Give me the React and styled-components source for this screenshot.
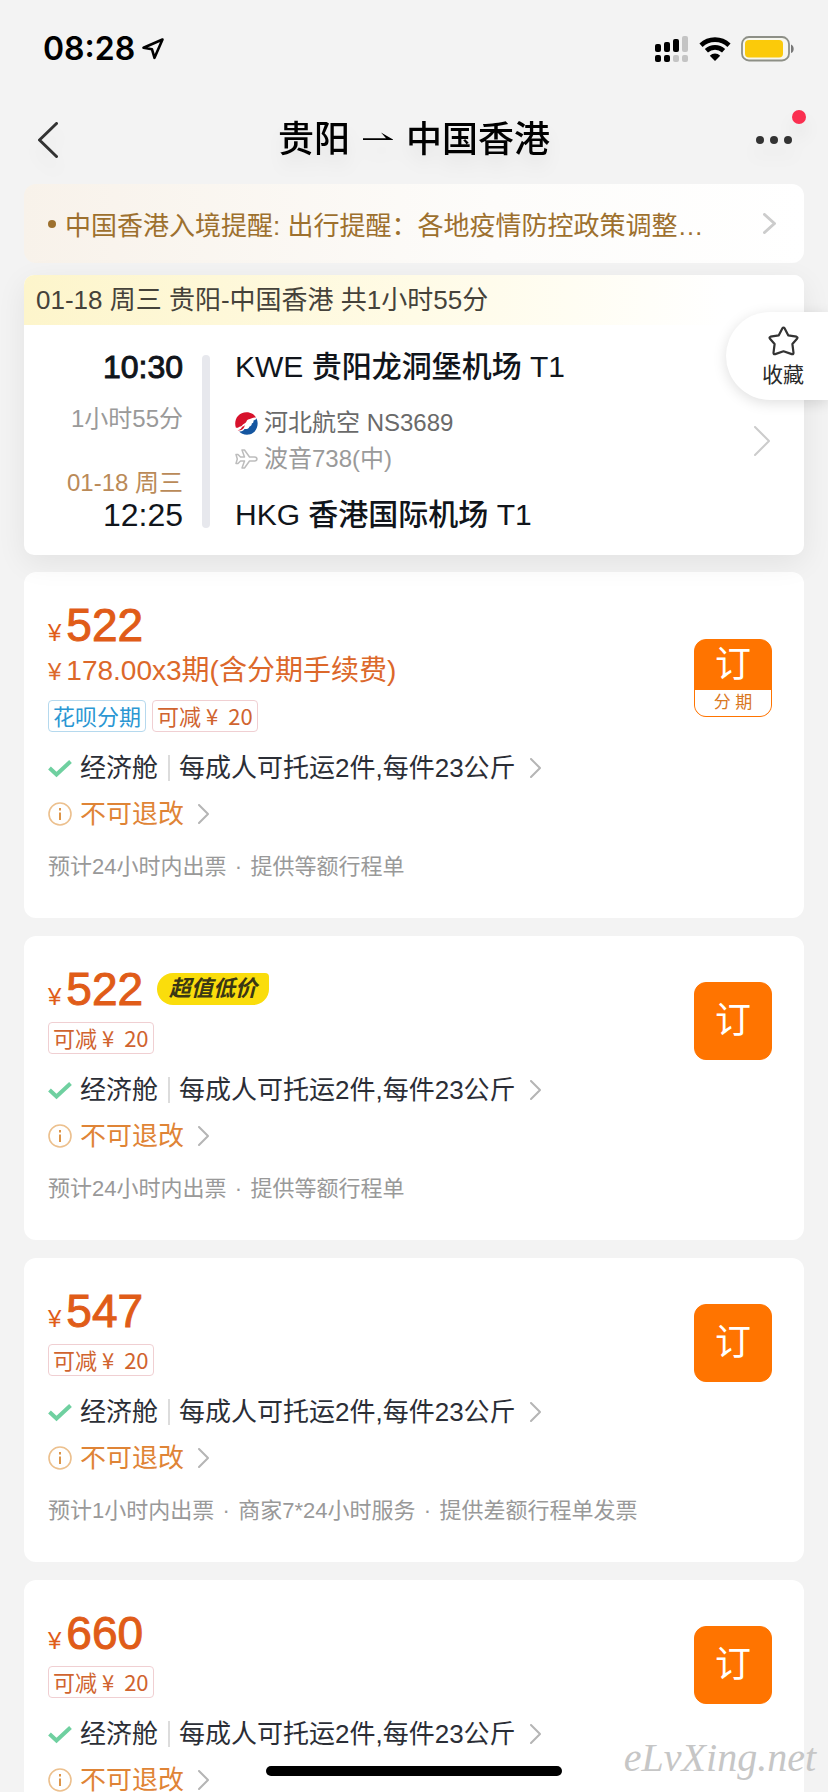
import React from "react";
import styled, { createGlobalStyle, css } from "styled-components";

const GlobalStyle = createGlobalStyle`
  *, *::before, *::after { box-sizing: border-box; }
  body {
    margin: 0;
    background: #f3f3f3;
    color: #2b2e36;
    font-family: "Liberation Sans", "Noto Sans CJK SC", sans-serif;
    font-size: 26px;
  }
  button { font: inherit; color: inherit; border: 0; padding: 0; background: none; cursor: pointer; }
  a { color: inherit; text-decoration: none; }
  h1, h2, p { margin: 0; font-weight: 400; }
  svg { display: block; flex: none; }
`;

const Screen = styled.div`
  position: relative;
  height: 100vh;
  overflow: hidden;
  display: flex;
  flex-direction: column;
`;

const StatusBar = styled.div`
  flex: none;
  height: 98px;
  padding: 0 33px 0 43px;
  display: flex;
  align-items: center;
  justify-content: space-between;
  color: #000;
`;

const Clock = styled.span`
  display: flex;
  align-items: center;
  gap: 6px;
  font: 600 32px/40px Inter, sans-serif;
`;

const Indicators = styled.span`
  display: flex;
  align-items: center;
  gap: 10px;
`;

const TopBar = styled.header`
  flex: none;
  height: 84px;
  padding: 0 36px 0 38px;
  display: grid;
  grid-template-columns: 78px 1fr 80px;
  align-items: center;
  filter: drop-shadow(0 12px 8px rgba(0, 0, 0, 0.06));
`;

const IconButton = styled.button`
  position: relative;
  height: 48px;
  display: flex;
  align-items: center;
  justify-content: ${(p) => (p.$end ? "flex-end" : "flex-start")};
`;

const UnreadDot = styled.i`
  position: absolute;
  top: -6px;
  right: -14px;
  width: 14px;
  height: 14px;
  border-radius: 50%;
  background: #fa2f50;
`;

const Route = styled.h1`
  display: flex;
  align-items: center;
  justify-content: center;
  gap: 13px;
  font-size: 36px;
  line-height: 48px;
  font-weight: 500;
  color: #000;
`;

const Content = styled.main`
  flex: 1;
  min-height: 0;
  overflow: hidden;
  padding: 2px 24px 0;
`;

const Notice = styled.a`
  display: flex;
  align-items: center;
  gap: 9px;
  height: 79px;
  margin-bottom: 12px;
  padding: 0 28px 0 24px;
  border-radius: 12px;
  background: linear-gradient(90deg, #f8f2ea, #fdfcfa 60%, #fff);
  color: #9d702e;
`;

const Bullet = styled.i`
  flex: none;
  width: 8px;
  height: 8px;
  border-radius: 50%;
  background: currentColor;
`;

const NoticeText = styled.span`
  flex: 1;
  min-width: 0;
  overflow: hidden;
  white-space: nowrap;
  text-overflow: ellipsis;
`;

const FlightCard = styled.section`
  position: relative;
  z-index: 1;
  margin-bottom: 17px;
  border-radius: 10px;
  overflow: hidden;
  background: #fff;
  box-shadow: 0 8px 30px rgba(0, 0, 0, 0.07);
`;

const FlightSummary = styled.h2`
  padding: 0 12px;
  font-size: 26px;
  line-height: 50px;
  color: #45423a;
  background: linear-gradient(90deg, #fdf5cb, #fffbe6 50%, #fff 90%);
`;

const FlightBody = styled.div`
  display: grid;
  grid-template-columns: 159px 8px 1fr auto;
  padding: 24px 34px 22px 0;
`;

const Times = styled.div`
  display: flex;
  flex-direction: column;
  align-items: flex-end;
  line-height: 28px;
  font-size: 24px;
  color: #9a9a9a;
`;

const Time = styled.time`
  font-size: 32px;
  line-height: 36px;
  color: #11151b;
  -webkit-text-stroke: ${(p) => (p.$strong ? "1px" : "0")} currentColor;
`;

const Duration = styled.span`
  margin: 20px 0 36px;
`;

const ArrivalDate = styled.span`
  color: #ba8a58;
`;

const Rail = styled.i`
  margin: 6px -19px 5px 19px;
  border-radius: 4px;
  background: #e7e8ed;
`;

const Stops = styled.div`
  padding-left: 44px;
`;

const Airport = styled.p`
  font-size: 30px;
  line-height: 36px;
  font-weight: 500;
  color: #11151b;
`;

const Carrier = styled.div`
  margin: 20px 0;
  font-size: 24px;
  line-height: 36px;
`;

const CarrierLine = styled.p`
  display: flex;
  align-items: center;
  gap: 6px;
  color: ${(p) => (p.$muted ? "#9a9a9a" : "#6a6a6a")};
`;

const DetailLink = styled.a`
  align-self: center;
`;

const FareCard = styled.article`
  margin-bottom: 18px;
  padding: 34px 32px 36px 24px;
  border-radius: 12px;
  background: #fff;
`;

const FareHead = styled.div`
  display: flex;
  align-items: center;
  justify-content: space-between;
`;

const Pricing = styled.div`
  padding-bottom: 18px;
`;

const PriceLine = styled.div`
  display: flex;
  align-items: center;
  gap: 14px;
  padding-bottom: 6px;
`;

const Price = styled.p`
  display: flex;
  align-items: baseline;
  gap: 5px;
  height: 38px;
  font-size: 24px;
  line-height: 38px;
  color: #e05c18;
`;

const Amount = styled.span`
  font-size: 46px;
  -webkit-text-stroke: 1px currentColor;
`;

const Installment = styled.p`
  display: flex;
  align-items: baseline;
  gap: 5px;
  height: 42px;
  font-size: 28px;
  line-height: 42px;
  color: #dc682a;
`;

const Currency = styled.span`
  font-size: 24px;
`;

const BestPrice = styled.strong`
  height: 32px;
  padding: 0 12px;
  border-radius: 16px 4px 16px 16px;
  background: #fadd0c;
  color: #3a3714;
  font-size: 22px;
  line-height: 32px;
  font-weight: 700;
  font-style: italic;
`;

const Tags = styled.div`
  display: flex;
  gap: 6px;
  padding-top: 8px;
`;

const tagTones = {
  blue: css`
    color: #2b97d3;
    border-color: #b5d9ee;
  `,
  red: css`
    color: #d0642f;
    border-color: #f0cfd2;
  `,
};

const Tag = styled.span`
  height: 32px;
  padding: 0 4px;
  border: 1px solid;
  border-radius: 4px;
  font-family: "Noto Sans CJK SC", sans-serif;
  font-size: 22px;
  line-height: 28px;
  white-space: pre;
  ${(p) => tagTones[p.$tone]}
`;

const TagYen = styled.span`
  margin: 0 5px;
`;

const BookButton = styled.button`
  flex: none;
  width: 78px;
  height: 78px;
  overflow: hidden;
  display: flex;
  flex-direction: column;
  border: 1px solid #ff7400;
  border-radius: 12px;
  background: #ff7400;
  color: #fff;
`;

const BookLabel = styled.span`
  flex: 1;
  align-self: stretch;
  display: grid;
  place-items: center;
  font-size: 36px;
  line-height: 40px;
  font-weight: 400;
`;

const BookNote = styled.span`
  align-self: stretch;
  background: #fff;
  color: #d9781f;
  font-size: 17px;
  line-height: 26px;
  text-align: center;
  white-space: pre;
`;

const Details = styled.div`
  display: flex;
  flex-direction: column;
  align-items: flex-start;
  gap: 10px;
`;

const DetailRow = styled.a`
  display: flex;
  align-items: center;
  gap: 8px;
  line-height: 36px;
  color: ${(p) => (p.$warn ? "#df8436" : "#2b2e36")};
`;

const Divider = styled.i`
  width: 2px;
  height: 26px;
  margin: 0 1px 0 2px;
  background: #dcdcdc;
`;

const RowArrow = styled.span`
  margin-left: 6px;
`;

const Footnote = styled.p`
  display: flex;
  margin-top: 20px;
  font-size: 22px;
  line-height: 30px;
  color: #999;
`;

const FootnoteItem = styled.span`
  & + &::before {
    content: "·";
    display: inline-block;
    width: 24px;
    text-align: center;
  }
`;

const FavoriteButton = styled.button`
  position: absolute;
  z-index: 2;
  top: 312px;
  right: 0;
  width: 102px;
  height: 88px;
  padding: 14px 24px 0 36px;
  display: flex;
  flex-direction: column;
  align-items: center;
  gap: 5px;
  border-radius: 44px 0 0 44px;
  background: #fff;
  box-shadow: 0 3px 14px rgba(0, 0, 0, 0.13);
  color: #2a2a2a;
  font-size: 21px;
  line-height: 28px;
  white-space: nowrap;
`;

const HomeIndicator = styled.i`
  position: absolute;
  z-index: 3;
  bottom: 16px;
  left: 50%;
  width: 296px;
  height: 10px;
  margin-left: -148px;
  border-radius: 5px;
  background: #000;
`;

const Watermark = styled.span`
  position: absolute;
  z-index: 3;
  right: 12px;
  bottom: 10px;
  color: #c6c6c6;
  font: italic 40px/48px "Liberation Serif", serif;
`;

function Chevron({ width, height, stroke = 2, color = "#b5b5b5", left }) {
  const a = stroke / 2;
  const pts = left
    ? `${width - a},${a} ${a},${height / 2} ${width - a},${height - a}`
    : `${a},${a} ${width - a},${height / 2} ${a},${height - a}`;
  return (
    <svg width={width} height={height} fill="none" stroke={color} strokeWidth={stroke} strokeLinecap="round" strokeLinejoin="round" aria-hidden="true">
      <polyline points={pts} />
    </svg>
  );
}

function LocationArrow() {
  return (
    <svg width="24" height="24" fill="none" stroke="#000" strokeWidth="2.6" strokeLinejoin="round" aria-hidden="true">
      <path d="M21.500 2.500L2.500 10.800L11 12.300L13.500 20.800Z" />
    </svg>
  );
}

function SignalIcon() {
  return (
    <svg width="34" height="28" aria-hidden="true">
      <g fill="#000">
        <rect x="0" y="9" width="6" height="8" rx="2" />
        <rect x="9" y="7" width="6" height="10" rx="2" />
        <rect x="18" y="4" width="6" height="13" rx="2" />
        <rect x="0" y="20" width="6" height="7" rx="2" />
        <rect x="9" y="20" width="6" height="7" rx="2" />
      </g>
      <g fill="#c4c4c4">
        <rect x="27" y="1" width="6" height="16" rx="2" />
        <rect x="18" y="20" width="6" height="7" rx="2" />
        <rect x="27" y="20" width="6" height="7" rx="2" />
      </g>
    </svg>
  );
}

function WifiIcon() {
  return (
    <svg width="32" height="26" aria-hidden="true">
      <g fill="none" stroke="#000" strokeWidth="4.600">
        <path d="M2 9.200A20.500 20.500 0 0 1 30 9.200" />
        <path d="M7.400 14.800A12.600 12.600 0 0 1 24.600 14.800" />
      </g>
      <path d="M16 25L10.800 19.700A7.400 7.400 0 0 1 21.200 19.700Z" />
    </svg>
  );
}

function BatteryIcon() {
  return (
    <svg width="54" height="26" aria-hidden="true">
      <rect x="1" y="1" width="47" height="23.500" rx="7" fill="#f7f7ee" stroke="#8d8f86" strokeWidth="1.800" />
      <rect x="4" y="4" width="38" height="17.500" rx="4" fill="#fbca0a" />
      <path d="M50 8.500C53.600 9.600 53.600 16 50 17Z" fill="#777" />
    </svg>
  );
}

function RouteArrow() {
  return (
    <svg width="30" height="16" aria-hidden="true">
      <path d="M0 6.200H23L18 .5L30.500 7.900H0Z" fill="#000" />
    </svg>
  );
}

function MoreIcon() {
  return (
    <svg width="36" height="8" fill="#333" aria-hidden="true">
      <circle cx="4" cy="4" r="4" />
      <circle cx="18" cy="4" r="4" />
      <circle cx="32" cy="4" r="4" />
    </svg>
  );
}

function AirlineLogo() {
  return (
    <svg width="23" height="23" viewBox="0 0 23 23" aria-hidden="true">
      <circle cx="11.500" cy="11.500" r="11.300" fill="#fff" />
      <path d="M.8 15.500C-1.500 8 3 .2 11.500 .2C16 .2 19.500 2.500 21 5.500C17.500 5 16.500 6.800 14 7.200C11 7.800 12 10.500 9.500 11.500C7.500 12.300 7.500 14 5.500 14.400C3.500 14.800 3 16.500 .8 15.500Z" fill="#d7122c" />
      <path d="M21.300 6.200C24.500 12 22 20.800 14 22.600C9.500 23.300 5.800 21.300 4.200 19.500C7 19.800 8.500 18.500 9.500 17C12 17.400 14 16.500 14.300 14.700C16.500 14 16.700 12.800 16.800 11.500C18.700 11 18.500 9.500 18.500 8.500C20 8.300 20.800 7.500 21.300 6.200Z" fill="#1556a0" />
      <path d="M2.500 18.300C5.500 18 6.300 16.500 7 15C8 14 9 14.500 9.800 13C9.500 16 7 19 2.500 18.300Z" fill="#d7122c" />
    </svg>
  );
}

function PlaneIcon() {
  return (
    <svg width="23" height="20" viewBox="0 0 23 20" fill="none" stroke="#bdbdbd" strokeWidth="1.500" strokeLinejoin="round" aria-hidden="true">
      <path d="M1 5.500H3L5.500 8H9.500L7 1H9.500L14.500 8H19.500C22.800 8.300 22.800 11.700 19.500 12H14.500L9.500 19H7L9.500 12H5.500L3 14.500H1L2.300 10Z" />
    </svg>
  );
}

function StarIcon() {
  return (
    <svg width="31" height="30" viewBox="0 0 31 30" fill="none" stroke="#333" strokeWidth="2.200" strokeLinejoin="round" aria-hidden="true">
      <path d="M14.300 2.400Q15.500 .8 16.700 2.400L20.200 9.300L28.500 10.700Q30.200 11.300 29 12.700L24.400 18L25.500 26.800Q25.500 28.700 23.800 28.100L15.500 25.300L7.200 28.100Q5.500 28.700 5.500 26.800L6.600 18L2 12.700Q.8 11.300 2.500 10.700L10.800 9.300Z" />
    </svg>
  );
}

function CheckIcon() {
  return (
    <svg width="24" height="24" fill="none" stroke="#6fd0a0" strokeWidth="4" aria-hidden="true">
      <path d="M1.500 12L8.500 18.500L22.500 5.500" />
    </svg>
  );
}

function InfoIcon() {
  return (
    <svg width="24" height="24" aria-hidden="true">
      <circle cx="12" cy="12" r="11" fill="none" stroke="#ecc08e" strokeWidth="1.600" />
      <path d="M11 10.500H13V18H11ZM11 6H13V8.400H11Z" fill="#dd9548" />
    </svg>
  );
}

function Fare({ price, best, installment, notes }) {
  return (
    <FareCard>
      <FareHead>
        <Pricing>
          <PriceLine>
            <Price>
              ¥<Amount>{price}</Amount>
            </Price>
            {best && <BestPrice>超值低价</BestPrice>}
          </PriceLine>
          {installment && (
            <Installment>
              <Currency>¥</Currency>
              {installment}
            </Installment>
          )}
          <Tags>
            {installment && <Tag $tone="blue">花呗分期</Tag>}
            <Tag $tone="red">
              可减<TagYen>¥</TagYen> 20
            </Tag>
          </Tags>
        </Pricing>
        <BookButton>
          <BookLabel>订</BookLabel>
          {installment && <BookNote>分 期</BookNote>}
        </BookButton>
      </FareHead>
      <Details>
        <DetailRow href="#baggage">
          <CheckIcon />
          经济舱
          <Divider />
          每成人可托运2件,每件23公斤
          <RowArrow>
            <Chevron width={11} height={20} />
          </RowArrow>
        </DetailRow>
        <DetailRow href="#refund" $warn>
          <InfoIcon />
          不可退改
          <RowArrow>
            <Chevron width={11} height={20} />
          </RowArrow>
        </DetailRow>
      </Details>
      <Footnote>
        {notes.map((note) => (
          <FootnoteItem key={note}>{note}</FootnoteItem>
        ))}
      </Footnote>
    </FareCard>
  );
}

const fares = [
  { id: 1, price: 522, installment: "178.00x3期(含分期手续费)", notes: ["预计24小时内出票", "提供等额行程单"] },
  { id: 2, price: 522, best: true, notes: ["预计24小时内出票", "提供等额行程单"] },
  { id: 3, price: 547, notes: ["预计1小时内出票", "商家7*24小时服务", "提供差额行程单发票"] },
  { id: 4, price: 660, notes: ["预计24小时内出票", "提供等额行程单"] },
];

export default function App() {
  return (
    <Screen lang="zh-CN">
      <GlobalStyle />
      <StatusBar>
        <Clock>
          08:28
          <LocationArrow />
        </Clock>
        <Indicators>
          <SignalIcon />
          <WifiIcon />
          <BatteryIcon />
        </Indicators>
      </StatusBar>
      <TopBar>
        <IconButton aria-label="返回">
          <Chevron left width={20} height={36} stroke={3} color="#333" />
        </IconButton>
        <Route>
          贵阳
          <RouteArrow />
          中国香港
        </Route>
        <IconButton $end aria-label="更多">
          <MoreIcon />
          <UnreadDot />
        </IconButton>
      </TopBar>
      <Content>
        <Notice href="#notice">
          <Bullet />
          <NoticeText>中国香港入境提醒: 出行提醒：各地疫情防控政策调整…</NoticeText>
          <Chevron width={13} height={21} stroke={3} color="#ccc" />
        </Notice>
        <FlightCard>
          <FlightSummary>01-18 周三 贵阳-中国香港 共1小时55分</FlightSummary>
          <FlightBody>
            <Times>
              <Time $strong>10:30</Time>
              <Duration>1小时55分</Duration>
              <ArrivalDate>01-18 周三</ArrivalDate>
              <Time>12:25</Time>
            </Times>
            <Rail />
            <Stops>
              <Airport>KWE 贵阳龙洞堡机场 T1</Airport>
              <Carrier>
                <CarrierLine>
                  <AirlineLogo />
                  河北航空 NS3689
                </CarrierLine>
                <CarrierLine $muted>
                  <PlaneIcon />
                  波音738(中)
                </CarrierLine>
              </Carrier>
              <Airport>HKG 香港国际机场 T1</Airport>
            </Stops>
            <DetailLink href="#flight" aria-label="航班详情">
              <Chevron width={16} height={30} color="#ccc" />
            </DetailLink>
          </FlightBody>
        </FlightCard>
        {fares.map(({ id, ...fare }) => (
          <Fare key={id} {...fare} />
        ))}
      </Content>
      <FavoriteButton>
        <StarIcon />
        收藏
      </FavoriteButton>
      <HomeIndicator />
      <Watermark>eLvXing.net</Watermark>
    </Screen>
  );
}
